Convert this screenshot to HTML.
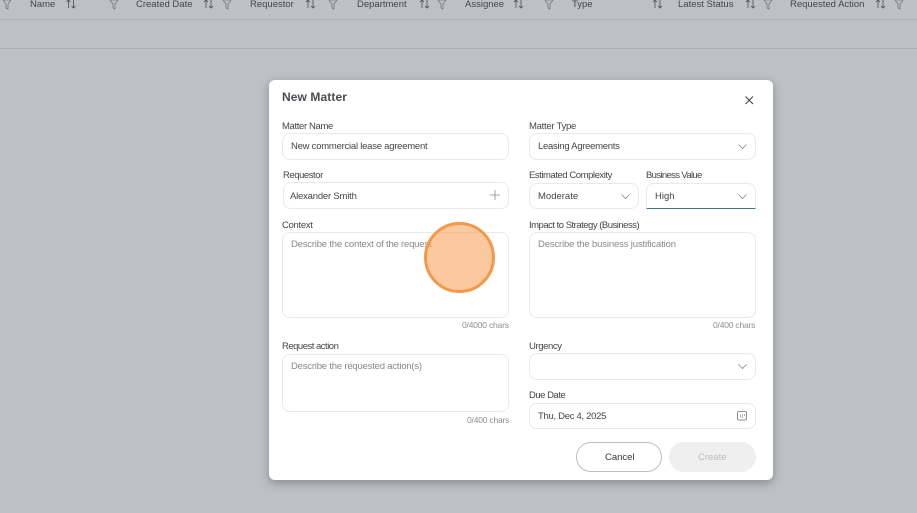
<!DOCTYPE html>
<html><head><meta charset="utf-8"><style>
html,body{margin:0;padding:0}
body{width:917px;height:513px;overflow:hidden;background:#bdc0c4;position:relative;font-family:"Liberation Sans",sans-serif;color:#43464a}
.t{position:absolute;white-space:nowrap;font-size:9.5px;line-height:12px}
.h{color:#43464a;top:-1px}
.l{position:absolute;left:0;width:917px;height:1px;background:#afb2b7}
#m{position:absolute;left:269px;top:80px;width:504px;height:400px;background:#fff;border-radius:6px;box-shadow:0 3px 9px rgba(60,60,60,.4)}
.b{position:absolute;box-sizing:border-box;border:1px solid #e8e9eb;border-radius:8px;background:#fff}
.p{color:#85888c}
.s{color:#8b8e92;font-size:8.5px}
svg{position:absolute;overflow:visible}
</style></head><body>
<div class="l" style="top:19px"></div>
<div class="l" style="top:48px"></div>

<div class="t h" style="left:30px">Name</div>
<div class="t h" style="left:136px">Created Date</div>
<div class="t h" style="left:250px">Requestor</div>
<div class="t h" style="left:357px">Department</div>
<div class="t h" style="left:465px">Assignee</div>
<div class="t h" style="left:572px">Type</div>
<div class="t h" style="left:678px">Latest Status</div>
<div class="t h" style="left:790px">Requested Action</div>

<svg width="917" height="20" style="left:0;top:0" fill="none" stroke="#75787c" stroke-width=".8">
<path d="M3 0H11L8 4V9L6 8V4Z"/>
<path d="M110 0H118L115 4V9L113 8V4Z"/>
<path d="M223 0H231L228 4V9L226 8V4Z"/>
<path d="M329 0H337L334 4V9L332 8V4Z"/>
<path d="M438 0H446L443 4V9L441 8V4Z"/>
<path d="M545 0H553L550 4V9L548 8V4Z"/>
<path d="M764 0H772L769 4V9L767 8V4Z"/>
<path d="M895 0H903L900 4V9L898 8V4Z"/>
<g stroke="#4a4d51">
<path d="M68.500 8V0M66.500 2L68.500 0L70.500 2M73.500 0V8M71.500 6L73.500 8L75.500 6"/>
<path d="M206 8V0M204 2L206 0L208 2M211 0V8M209 6L211 8L213 6"/>
<path d="M308 8V0M306 2L308 0L310 2M313 0V8M311 6L313 8L315 6"/>
<path d="M422 8V0M420 2L422 0L424 2M427 0V8M425 6L427 8L429 6"/>
<path d="M516 8V0M514 2L516 0L518 2M521 0V8M519 6L521 8L523 6"/>
<path d="M655 8V0M653 2L655 0L657 2M660 0V8M658 6L660 8L662 6"/>
<path d="M748 8V0M746 2L748 0L750 2M753 0V8M751 6L753 8L755 6"/>
<path d="M878 8V0M876 2L878 0L880 2M883 0V8M881 6L883 8L885 6"/>
</g>
</svg>

<div id="m">
<div class="t" style="left:13px;top:10px;font-size:12px;line-height:14px;font-weight:bold;color:#4a4d51;letter-spacing:.1px">New Matter</div>
<svg width="10" height="10" style="left:476px;top:16px" fill="none" stroke="#3c3f43" stroke-width="1"><path d="M.5 .5L8 8M8 .5L.5 8"/></svg>

<div class="t" style="left:13px;top:41px;letter-spacing:-.36px">Matter Name</div>
<div class="b" style="left:13px;top:53px;width:227px;height:27px"></div>
<div class="t" style="left:22px;top:61px;letter-spacing:-.24px">New commercial lease agreement</div>

<div class="t" style="left:14px;top:90px;letter-spacing:-.45px">Requestor</div>
<div class="b" style="left:14px;top:102px;width:226px;height:27px"></div>
<div class="t" style="left:21px;top:111px;letter-spacing:-.2px">Alexander Smith</div>
<svg width="10" height="10" style="left:221px;top:110px" fill="none" stroke="#8a8d91" stroke-width=".8"><path d="M5 0V10M0 5H10"/></svg>

<div class="t" style="left:13px;top:140px;letter-spacing:-.3px">Context</div>
<div class="b" style="left:13px;top:152px;width:227px;height:86px"></div>
<div class="t p" style="left:22px;top:159px;letter-spacing:-.2px">Describe the context of the request</div>
<div class="t s" style="left:193px;top:239px;letter-spacing:-.2px">0/4000 chars</div>

<div class="t" style="left:13px;top:261px;letter-spacing:-.5px">Request action</div>
<div class="b" style="left:13px;top:274px;width:227px;height:58px"></div>
<div class="t p" style="left:22px;top:281px;letter-spacing:-.2px">Describe the requested action(s)</div>
<div class="t s" style="left:198px;top:334px;letter-spacing:-.2px">0/400 chars</div>

<div class="t" style="left:260px;top:41px;letter-spacing:-.27px">Matter Type</div>
<div class="b" style="left:260px;top:53px;width:227px;height:27px"></div>
<div class="t" style="left:269px;top:61px;letter-spacing:-.28px">Leasing Agreements</div>
<svg width="9" height="5" style="left:469px;top:64px" fill="none" stroke="#85888c" stroke-width=".8"><path d="M.5 .5L4.500 4.500L8.500 .5"/></svg>

<div class="t" style="left:260px;top:90px;letter-spacing:-.45px">Estimated Complexity</div>
<div class="b" style="left:260px;top:103px;width:110px;height:26px"></div>
<div class="t" style="left:269px;top:111px">Moderate</div>
<svg width="9" height="5" style="left:352px;top:114px" fill="none" stroke="#85888c" stroke-width=".8"><path d="M.5 .5L4.500 4.500L8.500 .5"/></svg>

<div class="t" style="left:377px;top:90px;letter-spacing:-.65px">Business Value</div>
<div class="b" style="left:377px;top:103px;width:110px;height:26px;border-bottom:1px solid #3f7a8c;border-radius:8px 8px 0 0"></div>
<div class="t" style="left:386px;top:111px">High</div>
<svg width="9" height="5" style="left:469px;top:114px" fill="none" stroke="#85888c" stroke-width=".8"><path d="M.5 .5L4.500 4.500L8.500 .5"/></svg>

<div class="t" style="left:260px;top:140px;letter-spacing:-.5px">Impact to Strategy (Business)</div>
<div class="b" style="left:260px;top:152px;width:227px;height:86px"></div>
<div class="t p" style="left:269px;top:159px;letter-spacing:-.15px">Describe the business justification</div>
<div class="t s" style="left:444px;top:239px;letter-spacing:-.2px">0/400 chars</div>

<div class="t" style="left:260px;top:261px;letter-spacing:-.4px">Urgency</div>
<div class="b" style="left:260px;top:273px;width:227px;height:27px"></div>
<svg width="9" height="5" style="left:469px;top:284px" fill="none" stroke="#85888c" stroke-width=".8"><path d="M.5 .5L4.500 4.500L8.500 .5"/></svg>

<div class="t" style="left:260px;top:310px;letter-spacing:-.5px">Due Date</div>
<div class="b" style="left:260px;top:323px;width:227px;height:26px"></div>
<div class="t" style="left:269px;top:331px;letter-spacing:-.3px">Thu, Dec 4, 2025</div>
<svg width="10" height="10" style="left:468px;top:331px" fill="none" stroke="#6d7074" stroke-width=".8"><rect x=".5" y=".5" width="9" height="8.500" rx="1.500"/><path d="M3 4H4M5 4H6M7 4H8M3 6H4M5 6H6" stroke-width="1"/></svg>

<div class="b" style="left:307px;top:362px;width:86px;height:30px;border:1px solid #bcbec1;border-radius:15px"></div>
<div class="t" style="left:336px;top:372px;color:#33363a">Cancel</div>
<div class="b" style="left:400px;top:362px;width:87px;height:30px;border:0;border-radius:15px;background:#efefef"></div>
<div class="t" style="left:429px;top:372px;color:#b9bbbe">Create</div>
</div>

<div style="position:absolute;left:424px;top:222px;width:71px;height:71px;box-sizing:border-box;border-radius:50%;border:3px solid #f2994a;background:rgba(250,145,60,.5)"></div>
</body></html>
